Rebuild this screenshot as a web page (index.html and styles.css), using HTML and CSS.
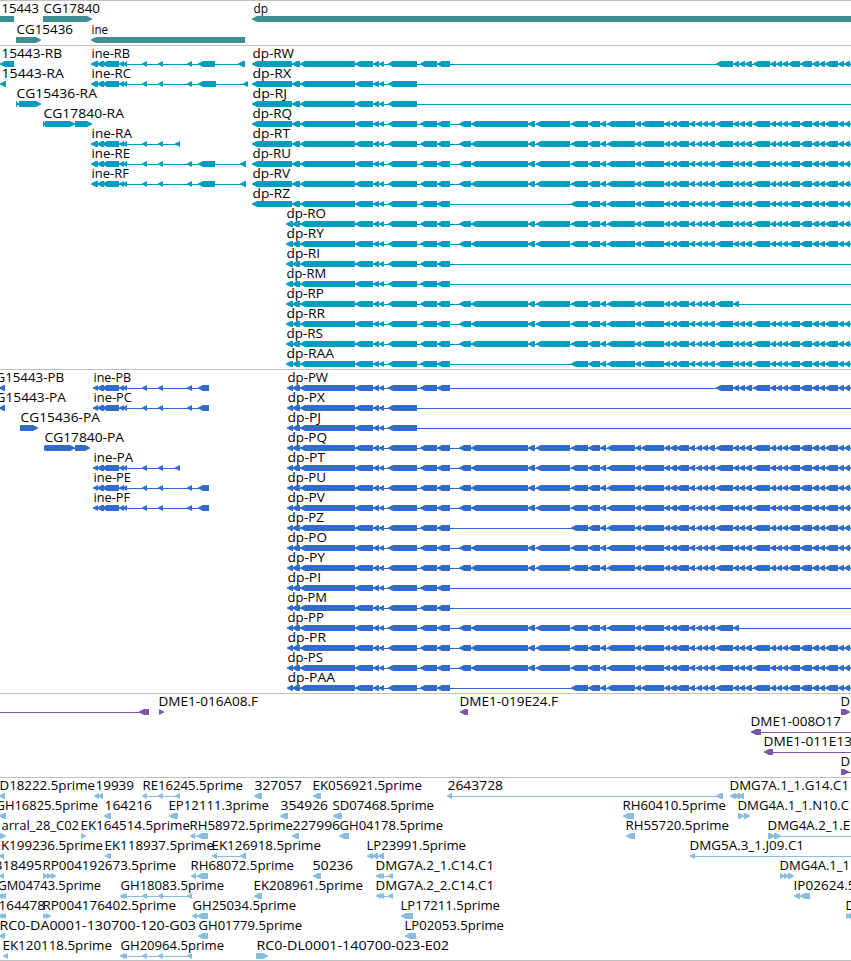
FILE: index.html
```html
<!DOCTYPE html>
<html lang="en">
<head>
    <meta charset="UTF-8">
    <title>Genome Browser</title>
    <link rel="stylesheet" href="styles.css">
</head>
<body>
    <main class="browser">
        <section class="track genes" id="genes"></section>
        <section class="track transcripts" id="transcripts"></section>
        <section class="track proteins" id="proteins"></section>
        <section class="track clones" id="clones"></section>
        <section class="track ests" id="ests"></section>
    </main>
    <script src="tracks.js"></script>
</body>
</html>
```
FILE: styles.css
```css
body {
    margin: 0;
    background-color: #fff;
    overflow: hidden;
}
.browser {
    display: flex;
    flex-direction: column;
    width: 851px;
    border-bottom: 1px solid #c0c0c0;
}
.track {
    box-sizing: border-box;
    border-top: 1px solid #c0c0c0;
}
.track svg {
    display: block;
    width: 100%;
    height: 100%;
    overflow: hidden;
}
.track text {
    font-family: "Open Sans", "Noto Sans", sans-serif;
    font-size: 12px;
    fill: #000;
}
.genes {
    height: 45px;
    color: #3f8e94;
}
.transcripts {
    height: 324px;
    color: #009dbf;
}
.proteins {
    height: 324px;
    color: #326ccb;
}
.clones {
    height: 84px;
    color: #7857a8;
}
.ests {
    height: 183px;
    color: #87bddf;
}
.track path {
    fill: currentColor;
}
```
FILE: tracks.js
```js
const EDGE = 860;

// Exon blocks shared by the dp isoforms
const head = "300-355 355-373 373-379 379-384 388-417";
const mid = " 420-437 437-450";
const left = " 459-471 471-528 528-535 536-570";
const right = " 571-588 588-600 600-606 607-635 635-641 641-664 664-670 670-677 676-689 689-695 696-702 702-708 708-715";
const tail = " 716-733 733-739 739-745 745-752 753-770 770-776 776-782 782-788 788-800 800-812 812-819 819-825 825-838 838-844 844-850 850-856";
const shapes = {
    W: head + mid + tail,
    X: head,
    I: head + mid,
    Q: head + mid + left + right + tail,
    Z: head + mid + right + tail,
    P: head + mid + left + right + " 716-733 733-739"
};
const longStart = "252-292 292-300 ";
const shortStart = "286-293 292-300 ";
const protStart = "287-293 292-300 ";

const ineR = "91-98 97-104 102-119 119-124 123-127 142-147 158-163";
const ineP = "93-98 97-104 102-119 119-124 123-127 142-147 158-163";
const ghExons = "120-125 123-127 142-147 158-163 187-192";

// [row, label, text start, text end, direction, exons, end of the line]
const genes = [
    [0, "15443", 1, 39, "", "-5-14"],
    [0, "CG17840", 43, 100, ">", "43-92"],
    [0, "dp", 253, 268, "<", "252-860"],
    [1, "CG15436", 16, 73, ">", "16-41"],
    [1, "ine", 91, 108, "<", "91-245"]
];

const transcripts = [
    [0, "15443-RB", 1, 62, "<", "0-14"],
    [1, "15443-RA", 1, 64, "<", "0-6"],
    [2, "CG15436-RA", 16, 97, ">", "16-19 19-41"],
    [3, "CG17840-RA", 43, 124, ">", "43-46 45-75 75-92"],
    [0, "ine-RB", 91, 130, "<", ineR + " 187-192 198-215 238-245"],
    [1, "ine-RC", 91, 131, "<", ineR + " 187-192 198-216 243-248"],
    [4, "ine-RA", 91, 132, "<", ineR + " 175-180"],
    [5, "ine-RE", 91, 130, "<", ineR + " 187-192 198-215 240-246"],
    [6, "ine-RF", 91, 129, "<", ineR + " 187-192 198-215 240-246"]
];
[["W", 294, "W"], ["X", 291, "X"], ["J", 287, "X"], ["Q", 292, "Q"], ["T", 290, "Q"],
 ["U", 291, "Q"], ["V", 290, "Q"], ["Z", 290, "Z"]].forEach(([name, end, shape], i) => {
    transcripts.push([i, "dp-R" + name, 252, end, "<", longStart + shapes[shape], EDGE]);
});
[["O", 326, "Q"], ["Y", 324, "Q"], ["I", 320, "I"], ["M", 326, "I"], ["P", 324, "P"],
 ["R", 325, "Q"], ["S", 323, "Q"], ["AA", 334, "Z"]].forEach(([name, end, shape], i) => {
    transcripts.push([i + 8, "dp-R" + name, 286, end, "<", shortStart + shapes[shape], EDGE]);
});

const proteins = [
    [0, "G15443-PB", -5, 64, "<", "-1-5"],
    [1, "G15443-PA", -5, 66, "<", "-1-5"],
    [2, "CG15436-PA", 20, 100, ">", "20-38"],
    [3, "CG17840-PA", 44, 124, ">", "44-46 45-75 75-90"],
    [0, "ine-PB", 93, 131, "<", ineP + " 187-192 198-209"],
    [1, "ine-PC", 93, 132, "<", ineP + " 187-192 198-209"],
    [4, "ine-PA", 93, 133, "<", ineP + " 175-180"],
    [5, "ine-PE", 93, 131, "<", ineP + " 187-192 198-209"],
    [6, "ine-PF", 93, 130, "<", ineP + " 187-192 198-209"]
];
[["W", 328, "W"], ["X", 325, "X"], ["J", 321, "X"], ["Q", 327, "Q"], ["T", 325, "Q"],
 ["U", 326, "Q"], ["V", 325, "Q"], ["Z", 324, "Z"], ["O", 327, "Q"], ["Y", 325, "Q"],
 ["I", 321, "I"], ["M", 327, "I"], ["P", 324, "P"], ["R", 326, "Q"], ["S", 323, "Q"],
 ["AA", 335, "Z"]].forEach(([name, end, shape], i) => {
    proteins.push([i, "dp-P" + name, 287, end, "<", protStart + shapes[shape], EDGE]);
});

const clones = [
    [0, "", 0, 0, "<", "-20--10 139-149"],
    [0, "DME1-016A08.F", 158, 258, ">", "159-164"],
    [0, "DME1-019E24.F", 459, 558, "<", "460-468"],
    [0, "D", 840, 850, ">", "841-850"],
    [1, "DME1-008O17", 750, 841, "<", "751-761", EDGE],
    [2, "DME1-011E13", 763, 852, "<", "764-773", EDGE],
    [3, "D", 840, 850, ">", "841-849", EDGE]
];

const ests = [
    [0, "D18222.5prime", -1, 95, "<", "-1-5"],
    [0, "19939", 95, 134, "<", "94-99 98-103"],
    [0, "RE16245.5prime", 142, 243, "<", "142-147 158-163 175-180"],
    [0, "327057", 254, 302, "<", "254-262"],
    [0, "EK056921.5prime", 312, 422, "<", "313-321"],
    [0, "2643728", 447, 503, "<", "447-452 716-723"],
    [0, "DMG7A.1_1.G14.C1", 729, 849, "<", "730-736 734-740 738-744"],
    [1, "GH16825.5prime", -5, 98, "<", "-1-6"],
    [1, "164216", 104, 152, "<", "104-111"],
    [1, "EP12111.3prime", 168, 269, "<", "169-178"],
    [1, "354926", 280, 328, "<", "280-288"],
    [1, "SD07468.5prime", 332, 434, "<", "333-342"],
    [1, "RH60410.5prime", 622, 726, "<", "623-634"],
    [1, "DMG4A.1_1.N10.C", 737, 849, ">", "738-744 744-750"],
    [2, "arral_28_C02", 1, 79, ">", "0-6"],
    [2, "EK164514.5prime", 80, 190, ">", "81-86"],
    [2, "RH58972.5prime", 189, 293, "<", "190-195 197-208"],
    [2, "227996", 292, 340, "<", "292-299"],
    [2, "GH04178.5prime", 339, 443, "<", "339-349"],
    [2, "RH55720.5prime", 625, 729, "<", "626-635"],
    [2, "DMG4A.2_1.E", 767, 850, ">", "768-775 774-781", EDGE],
    [3, "EK199236.5prime", -7, 103, "<", "-1-4"],
    [3, "EK118937.5prime", 104, 214, "<", "105-111"],
    [3, "EK126918.5prime", 211, 321, "<", "212-217 240-246"],
    [3, "LP23991.5prime", 366, 466, "<", "367-373 372-378 378-384"],
    [3, "DMG5A.3_1.J09.C1", 689, 804, "<", "690-695", EDGE],
    [4, "318495", -6, 42, "<", "-1-4"],
    [4, "RP004192673.5prime", 42, 176, ">", "43-48 47-52 51-56"],
    [4, "RH68072.5prime", 190, 294, "<", "191-196 197-208"],
    [4, "50236", 312, 353, "<", "313-321"],
    [4, "DMG7A.2_1.C14.C1", 375, 494, "<", "376-381 379-384 388-393"],
    [4, "DMG4A.1_1", 779, 850, ">", "780-785 784-789 788-794"],
    [5, "GM04743.5prime", -3, 101, "<", "-2-3 1-6"],
    [5, "GH18083.5prime", 120, 224, "<", ghExons],
    [5, "EK208961.5prime", 253, 363, "<", "254-262"],
    [5, "DMG7A.2_2.C14.C1", 375, 494, "<", "376-381 379-384 388-393"],
    [5, "IP02624.5prime", 793, 893, "<", "794-800 800-810"],
    [6, "164478", -2, 45, "<", "-2-3 1-6"],
    [6, "RP004176402.5prime", 42, 176, ">", "43-47 46-51"],
    [6, "GH25034.5prime", 192, 296, "<", "192-197 197-208"],
    [6, "LP17211.5prime", 400, 500, "<", "401-413"],
    [6, "D", 845, 855, ">", "846-850 849-854"],
    [7, "RC0-DA0001-130700-120-G03", -1, 196, "<", "-1-5"],
    [7, "GH01779.5prime", 198, 302, "<", "198-208"],
    [7, "LP02053.5prime", 404, 504, "<", "405-416"],
    [8, "EK120118.5prime", 2, 112, "<", "3-8"],
    [8, "GH20964.5prime", 120, 224, "<", ghExons],
    [8, "RC0-DL0001-140700-023-E02", 256, 449, ">", "256-268"]
];

function block(a, b, y, dir) {
    const n = Math.min(5, b - a);
    if (dir === "<") {
        return `M${a} ${y + 3.5}V${y + 2.5}L${a + n} ${y}H${b}V${y + 6}H${a + n}Z`;
    }
    if (dir === ">") {
        return `M${b} ${y + 3.5}V${y + 2.5}L${b - n} ${y}H${a}V${y + 6}H${b - n}Z`;
    }
    return `M${a} ${y}H${b}V${y + 6}H${a}Z`;
}

function drawTrack(id, items, rowHeight) {
    let svg = "<svg>";
    for (const [row, label, x1, x2, dir, exons, end] of items) {
        const top = row * rowHeight;
        const blocks = exons.split(" ").map(s => s.match(/^(-?\d+)-(-?\d+)$/).slice(1).map(Number));
        const from = blocks[0][0];
        const to = end || blocks[blocks.length - 1][1];
        let d = "";
        // Connecting line through the introns
        if (blocks.length > 1 || end) {
            d += `M${from + 1} ${top + 18}H${to - 1}V${top + 19}H${from + 1}Z`;
        }
        svg += `<path d="${d}"/>`;
        for (const [a, b] of blocks) {
            svg += `<path d="${block(a, b, top + 15, dir)}"/>`;
        }
        if (label) {
            svg += `<text x="${x1 + 0.5}" y="${top + 12}" textLength="${x2 - x1 - 0.5}" lengthAdjust="spacingAndGlyphs">${label}</text>`;
        }
    }
    document.getElementById(id).innerHTML = svg + "</svg>";
}

drawTrack("genes", genes, 21);
drawTrack("transcripts", transcripts, 20);
drawTrack("proteins", proteins, 20);
drawTrack("clones", clones, 20);
drawTrack("ests", ests, 20);
```
